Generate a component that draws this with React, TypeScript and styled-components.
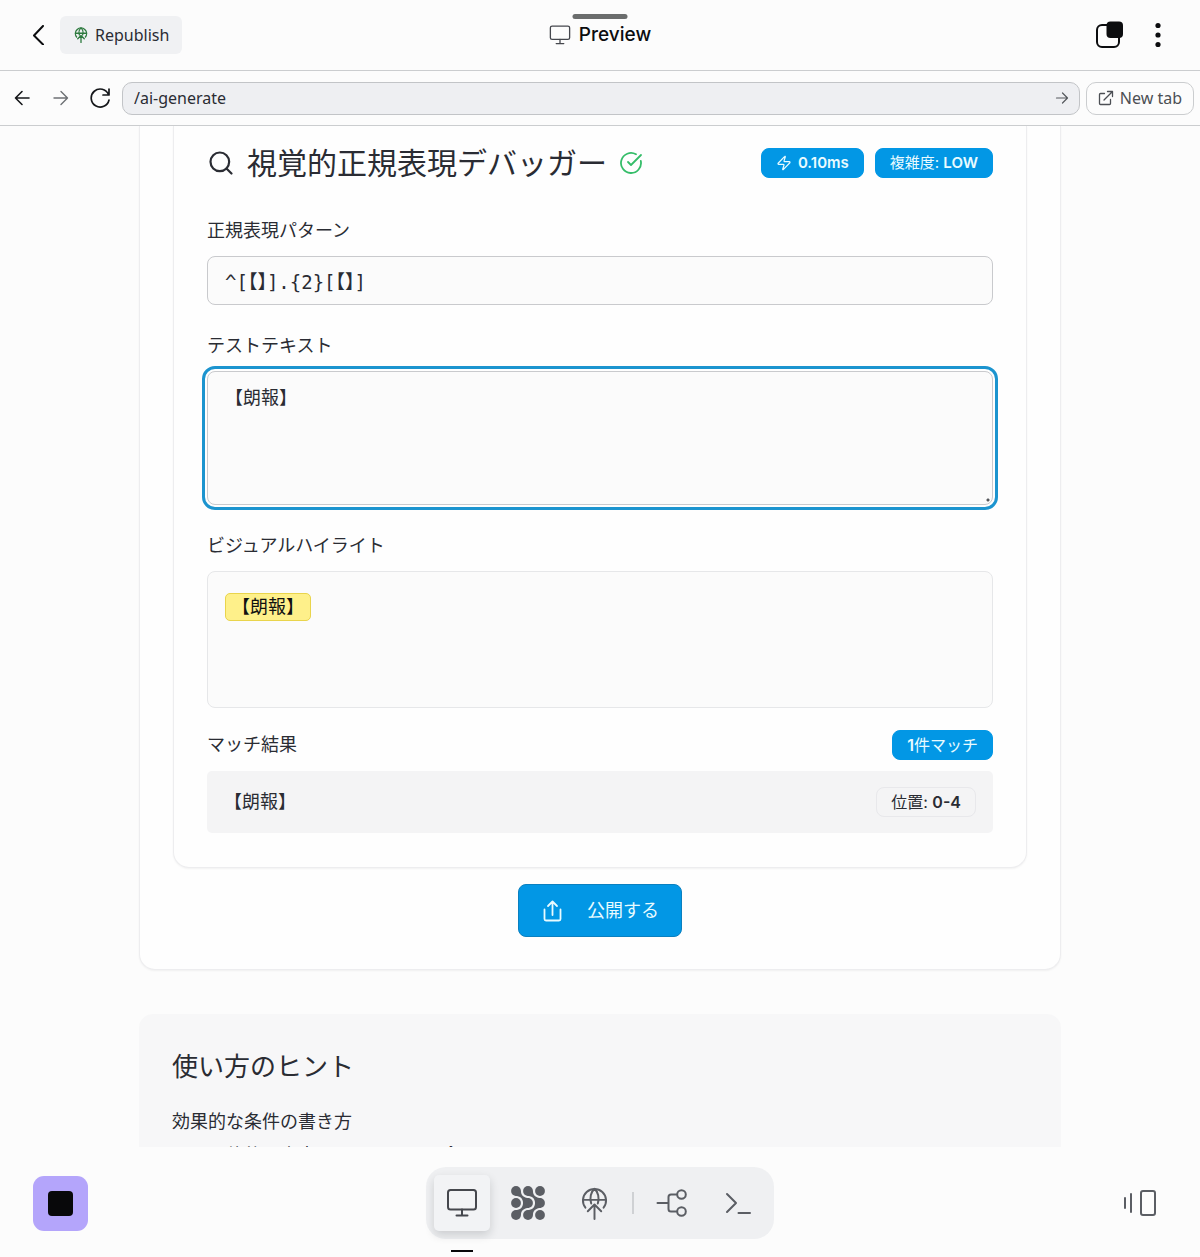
import React, { useState } from "react";
import styled, { createGlobalStyle, css } from "styled-components";
import { CircleCheckBig, Search, Zap } from "lucide-react";

const shell = '"Noto Sans", "Noto Sans CJK JP", sans-serif';
const body = 'Inter, "Noto Sans CJK JP", sans-serif';
const mono = '"DejaVu Sans Mono", "Noto Sans CJK JP", monospace';

const blue = "#0297e5";
const ink = "#2a2c33";
const line = "#cbcdcf";

const GlobalStyle = createGlobalStyle`
  *, *::before, *::after { box-sizing: border-box; }
  body { margin: 0; background: #fcfcfc; color: ${ink}; font-family: ${body}; }
  button, input, textarea { font: inherit; color: inherit; margin: 0; }
  button { cursor: pointer; }
  svg { display: block; flex: none; }
  h1, h2, h3, p, ul { margin: 0; padding: 0; font-weight: 400; }
`;

const Screen = styled.div`
  display: flex;
  flex-direction: column;
  height: 100vh;
  overflow: hidden;
`;

/* ---------- top bar ---------- */

const TopBar = styled.header`
  position: relative;
  display: grid;
  grid-template-columns: 1fr auto 1fr;
  align-items: center;
  height: 71px;
  flex: none;
  padding: 0 28px;
  border-bottom: 1px solid ${line};
  font-family: ${shell};
`;

const Handle = styled.span`
  position: absolute;
  top: 14px;
  left: 50%;
  width: 55px;
  height: 5px;
  border-radius: 3px;
  background: #6b6d6d;
  transform: translateX(-50%);
`;

const Side = styled.div<{ $end?: boolean }>`
  display: flex;
  align-items: center;
  gap: ${(p) => (p.$end ? "20px" : "12px")};
  justify-content: ${(p) => (p.$end ? "flex-end" : "flex-start")};
`;

const IconButton = styled.button`
  display: flex;
  align-items: center;
  justify-content: center;
  padding: 0;
  border: 0;
  background: none;
  color: #0c0d0f;
`;

const Republish = styled.button`
  display: flex;
  align-items: center;
  gap: 6px;
  height: 38px;
  padding: 0 13px;
  border: 0;
  border-radius: 6px;
  background: #f0f1f3;
  font-size: 16px;
  line-height: 24px;
`;

const ScreenTitle = styled.h1`
  display: flex;
  align-items: center;
  gap: 8px;
  color: #0c0d0f;
  font-family: Inter, sans-serif;
  font-size: 19px;
  font-weight: 500;
  line-height: 24px;
`;

/* ---------- browser bar ---------- */

const BrowserBar = styled.nav`
  display: flex;
  align-items: center;
  gap: 6px;
  height: 55px;
  flex: none;
  padding: 0 6px;
  border-bottom: 1px solid ${line};
  font-family: ${shell};
  font-size: 16px;
`;

const NavButtons = styled.div`
  display: flex;
  gap: 7px;
`;

const NavButton = styled(IconButton)<{ $muted?: boolean }>`
  width: 32px;
  height: 32px;
  color: ${(p) => (p.$muted ? "#6d7074" : "#15171a")};
`;

const Address = styled.form`
  display: flex;
  align-items: center;
  flex: 1;
  min-width: 0;
  height: 33px;
  padding: 0 10px 0 11px;
  border: 1px solid #c2c4c7;
  border-radius: 10px;
  background: #eeeff2;
`;

const AddressInput = styled.input`
  flex: 1;
  min-width: 0;
  padding: 0;
  border: 0;
  outline: 0;
  background: none;
`;

const NewTab = styled.a`
  display: flex;
  align-items: center;
  gap: 6px;
  height: 33px;
  padding: 0 11px;
  border: 1px solid ${line};
  border-radius: 10px;
  color: #4c4f54;
  text-decoration: none;
`;

/* ---------- page ---------- */

const Page = styled.main`
  flex: 1;
  min-height: 0;
  overflow: hidden;
`;

const Column = styled.div`
  display: flex;
  flex-direction: column;
  gap: 44px;
  width: calc(100% - 32px);
  max-width: 922px;
  margin: 0 auto;
`;

const cardEdge = css`
  border: 1px solid #ededef;
  border-top: 0;
  border-radius: 0 0 16px 16px;
  background: #fefefe;
  box-shadow: 0 1px 2px rgba(0, 0, 0, 0.05);
`;

const OuterCard = styled.section`
  ${cardEdge}
  display: flex;
  flex-direction: column;
  align-items: center;
  gap: 16px;
  padding: 0 33px 32px;
`;

const InnerCard = styled.section`
  ${cardEdge}
  width: 100%;
  padding: 19px 33px 34px;
`;

const SplitRow = styled.div`
  display: flex;
  align-items: center;
  justify-content: space-between;
`;

const Cluster = styled.div<{ $gap: number }>`
  display: flex;
  align-items: center;
  gap: ${(p) => p.$gap}px;
`;

const CardTitle = styled.h2`
  font-size: 30px;
  line-height: 36px;
`;

const Badge = styled.span<{ $outline?: boolean; $large?: boolean }>`
  display: flex;
  align-items: center;
  gap: 6px;
  height: 30px;
  padding: 0 14px;
  border: 1px solid ${(p) => (p.$outline ? "#e8e8eb" : blue)};
  border-radius: 8px;
  background: ${(p) => (p.$outline ? "transparent" : blue)};
  color: ${(p) => (p.$outline ? ink : "#e9fbff")};
  font-size: ${(p) => (p.$large ? "16px" : "15px")};
  line-height: 20px;
  white-space: pre;

  strong { font-weight: 600; }
`;

const Field = styled.div`
  display: flex;
  flex-direction: column;
  gap: 13px;
  margin-top: 29px;

  &:first-of-type { margin-top: 0; }
`;

const Fields = styled.div`
  margin: 38px 0 22px;
`;

const labelText = css`
  font-size: 18px;
  line-height: 24px;
`;

const Label = styled.label`${labelText}`;
const Heading = styled.h3`${labelText}`;

const boxEdge = css`
  display: block;
  width: 100%;
  border: 1px solid #c9cacd;
  border-radius: 8px;
  background: #fbfbfb;
  font-size: 18px;
`;

const PatternInput = styled.input`
  ${boxEdge}
  height: 49px;
  padding: 0 17px;
  font-family: ${mono};
  font-size: 19px;
  font-feature-settings: "halt";
`;

const TestArea = styled.textarea`
  ${boxEdge}
  height: 134px;
  padding: 13px 17px;
  line-height: 26px;
  outline: 3px solid #1c94cf;
  outline-offset: 2px;
  resize: vertical;

  &::-webkit-resizer {
    background: radial-gradient(circle at 11px 11px, #55575b 1px, transparent 2px);
  }
`;

const Preview = styled.div`
  ${boxEdge}
  height: 137px;
  padding: 21px 17px;
  border-color: #e6e7e9;
`;

const Match = styled.mark`
  display: inline-block;
  padding: 0 6px;
  border: 1px solid #e9d44c;
  border-radius: 5px;
  background: #fef08a;
  color: #111;
  line-height: 26px;
  vertical-align: top;
`;

const ResultRow = styled.li`
  display: flex;
  align-items: center;
  justify-content: space-between;
  height: 62px;
  margin-top: 11px;
  padding: 0 17px;
  border-radius: 5px;
  background: #f4f4f5;
  font-size: 18px;
  line-height: 24px;
`;

const PublishButton = styled.button`
  display: flex;
  align-items: center;
  gap: 22px;
  height: 53px;
  padding: 0 22px;
  border: 1px solid #0a80c0;
  border-radius: 8px;
  background: ${blue};
  color: #e9fbff;
  font-size: 18px;
  line-height: 24px;
`;

const Hints = styled.section`
  padding: 35px 33px;
  border-radius: 14px;
  background: #f7f7f8;
`;

const HintsTitle = styled.h2`
  margin-bottom: 25px;
  font-size: 26px;
  line-height: 36px;
`;

const HintList = styled.ul`
  margin-top: 9px;
  padding-left: 36px;
  font-size: 18px;
  line-height: 26px;
`;

/* ---------- dock ---------- */

const Footer = styled.footer`
  display: grid;
  grid-template-columns: 1fr auto 1fr;
  align-items: center;
  flex: none;
  padding: 20px 33px 18px;
`;

const StopButton = styled.button`
  display: flex;
  align-items: center;
  justify-content: center;
  width: 55px;
  height: 55px;
  padding: 0;
  border: 0;
  border-radius: 11px;
  background: #b4a5fb;
`;

const StopMark = styled.span`
  width: 25px;
  height: 25px;
  border-radius: 4px;
  background: #08080a;
`;

const PanesButton = styled(IconButton)`
  width: 55px;
  height: 55px;
`;

const Dock = styled.div`
  display: flex;
  align-items: center;
  gap: 10px;
  height: 72px;
  padding: 0 8px;
  border-radius: 20px;
  background: #eff0f2;
`;

const DockButton = styled.button<{ $active?: boolean }>`
  position: relative;
  display: flex;
  align-items: center;
  justify-content: center;
  width: 56px;
  height: 56px;
  padding: 0;
  border: 0;
  border-radius: 5px;
  background: none;
  color: #5b5e64;

  ${(p) =>
    p.$active &&
    css`
      background: #f2f3f5;
      color: #45474d;
      box-shadow: 0 4px 10px rgba(20, 24, 32, 0.16);

      &::after {
        content: "";
        position: absolute;
        top: 75px;
        left: 17px;
        width: 22px;
        height: 2px;
        background: #08080a;
      }
    `}
`;

const DockDivider = styled.span`
  width: 2px;
  height: 22px;
  background: #cfd1d4;
`;

/* ---------- icons ---------- */

type IconProps = { size: number; box?: number; width?: number; color?: string; children: React.ReactNode };

const Icon = ({ size, box = size, width = 2, color = "currentColor", children }: IconProps) => (
  <svg
    width={size}
    height={size}
    viewBox={`0 0 ${box} ${box}`}
    fill="none"
    stroke={color}
    strokeWidth={width}
    strokeLinecap="round"
    strokeLinejoin="round"
    aria-hidden="true"
  >
    {children}
  </svg>
);

const MonitorIcon = ({ size, width, color }: { size: number; width: number; color?: string }) => (
  <Icon size={size} box={32} width={width} color={color}>
    <rect x="2" y="3" width="28" height="19.5" rx="2.5" />
    <path d="M16 22.5v6M10.5 28.5h11" />
  </Icon>
);

const GlobeUpIcon = ({ size, width, color }: { size: number; width: number; color?: string }) => (
  <Icon size={size} box={32} width={width} color={color}>
    <path d="M7.2 20A11.2 11.2 0 1 1 24.8 20" />
    <path d="M5 12.5h22M12.8 16C11 11 12.5 4.500 16 1.800C19.500 4.500 21 11 19.200 16" />
    <path d="M16 31V17M9.500 23.500l6.500-6.500 6.500 6.500" />
  </Icon>
);

const DotsWeaveIcon = () => (
  <svg width="34" height="34" viewBox="0 0 34 34" fill="currentColor" aria-hidden="true">
    {[5, 17, 29].map((y) => [5, 17, 29].map((x) => <circle key={`${x}-${y}`} cx={x} cy={y} r="4.9" />))}
    {[0, 12].map((dx) => (
      <g key={dx} transform={`translate(${dx} 0)`}>
        <path d="M9.800 4.200C10 9.500 12.500 11.500 18 12.200L17 21.800C13 21.500 12.200 19.500 12.100 17C11.800 12.500 9.500 10.200 4.200 9.800z" />
        <path d="M9.800 29.800C10 24.500 12.500 22.500 18 21.800L17 12.200C13 12.500 12.200 14.500 12.100 17C11.800 21.500 9.500 23.800 4.200 24.200z" />
      </g>
    ))}
  </svg>
);

export default function App() {
  const [path, setPath] = useState("/ai-generate");
  const [pattern, setPattern] = useState("^[【】].{2}[【】]");
  const [text, setText] = useState("【朗報】");

  return (
    <Screen>
      <GlobalStyle />
      <TopBar>
        <Handle />
        <Side>
          <IconButton aria-label="Back">
            <Icon size={20} width={2}>
              <path d="M15 1L6 10.5l9 9" />
            </Icon>
          </IconButton>
          <Republish>
            <GlobeUpIcon size={16} width={2.6} color="#2d7a3e" />
            Republish
          </Republish>
        </Side>
        <ScreenTitle>
          <MonitorIcon size={22} width={1.9} color="#45474d" />
          Preview
        </ScreenTitle>
        <Side $end>
          <IconButton aria-label="Tabs">
            <Icon size={30} width={2}>
              <rect x="3" y="5" width="22" height="22" rx="5" />
              <rect x="12.5" y="1.5" width="16.5" height="16.5" rx="4" fill="currentColor" stroke="none" />
            </Icon>
          </IconButton>
          <IconButton aria-label="More">
            <Icon size={28}>
              <g fill="currentColor" stroke="none">
                <circle cx="14" cy="4.5" r="2.6" />
                <circle cx="14" cy="14" r="2.6" />
                <circle cx="14" cy="23.5" r="2.6" />
              </g>
            </Icon>
          </IconButton>
        </Side>
      </TopBar>

      <BrowserBar>
        <NavButtons>
          <NavButton aria-label="Go back">
            <Icon size={16} width={1.6}>
              <path d="M15 8H1.5M8 1.5L1.5 8 8 14.5" />
            </Icon>
          </NavButton>
          <NavButton aria-label="Go forward" $muted>
            <Icon size={16} width={1.4}>
              <path d="M1 8h13.5M8 1.5L14.5 8 8 14.5" />
            </Icon>
          </NavButton>
          <NavButton aria-label="Reload">
            <Icon size={22} width={1.7}>
              <path d="M20 2v6h-6M19.5 7.5A9 9 0 1 0 20 13" />
            </Icon>
          </NavButton>
        </NavButtons>
        <Address onSubmit={(e) => e.preventDefault()}>
          <AddressInput aria-label="Address" value={path} onChange={(e) => setPath(e.target.value)} />
          <IconButton aria-label="Go">
            <Icon size={14} width={1.2} color="#55585d">
              <path d="M1.5 7h11M7.5 2l5 5-5 5" />
            </Icon>
          </IconButton>
        </Address>
        <NewTab href="#new-tab">
          <Icon size={16} width={1.3}>
            <path d="M6.5 3.5h-4a1 1 0 0 0-1 1v9a1 1 0 0 0 1 1h9a1 1 0 0 0 1-1v-4M6 10l8.5-8.5M9.5 1.5h5v5" />
          </Icon>
          New tab
        </NewTab>
      </BrowserBar>

      <Page>
        <Column>
          <OuterCard>
            <InnerCard>
              <SplitRow>
                <Cluster $gap={12}>
                  <Search size={28} strokeWidth={1.9} />
                  <CardTitle>視覚的正規表現デバッガー</CardTitle>
                  <CircleCheckBig size={24} strokeWidth={1.8} color="#35bd69" />
                </Cluster>
                <Cluster $gap={11}>
                  <Badge>
                    <Zap size={16} strokeWidth={1.8} />
                    <strong>0.10ms</strong>
                  </Badge>
                  <Badge>
                    <span>
                      複雑度: <strong>LOW</strong>
                    </span>
                  </Badge>
                </Cluster>
              </SplitRow>

              <Fields>
                <Field>
                  <Label htmlFor="pattern">正規表現パターン</Label>
                  <PatternInput id="pattern" value={pattern} onChange={(e) => setPattern(e.target.value)} />
                </Field>
                <Field>
                  <Label htmlFor="text">テストテキスト</Label>
                  <TestArea id="text" value={text} onChange={(e) => setText(e.target.value)} />
                </Field>
                <Field>
                  <Heading>ビジュアルハイライト</Heading>
                  <Preview>
                    <Match>【朗報】</Match>
                  </Preview>
                </Field>
              </Fields>

              <SplitRow>
                <Heading>マッチ結果</Heading>
                <Badge $large>
                  <span>
                    <strong>1</strong>件マッチ
                  </span>
                </Badge>
              </SplitRow>
              <ul>
                <ResultRow>
                  【朗報】
                  <Badge $outline $large>
                    <span>
                      位置: <strong>0-4</strong>
                    </span>
                  </Badge>
                </ResultRow>
              </ul>
            </InnerCard>

            <PublishButton>
              <Icon size={24} width={1.8}>
                <path d="M3.5 10.500V20a1.500 1.500 0 0 0 1.500 1.500h13A1.500 1.500 0 0 0 19.500 20v-9.500M11.500 16V2.500M7 7L11.500 2.500 16 7" />
              </Icon>
              公開する
            </PublishButton>
          </OuterCard>

          <Hints>
            <HintsTitle>使い方のヒント</HintsTitle>
            <Heading>効果的な条件の書き方</Heading>
            <HintList>
              <li>具体的な文字やキーワードを含む</li>
            </HintList>
          </Hints>
        </Column>
      </Page>

      <Footer>
        <Side>
          <StopButton aria-label="Stop">
            <StopMark />
          </StopButton>
        </Side>
        <Dock>
          <DockButton $active aria-label="Preview">
            <MonitorIcon size={32} width={2} />
          </DockButton>
          <DockButton aria-label="Agent">
            <DotsWeaveIcon />
          </DockButton>
          <DockButton aria-label="Publish">
            <GlobeUpIcon size={33} width={1.9} />
          </DockButton>
          <DockDivider />
          <DockButton aria-label="Version control">
            <Icon size={32} width={2}>
              <path d="M1.5 16h11M21 7.5h-6a2.5 2.5 0 0 0-2.5 2.5v12a2.5 2.5 0 0 0 2.5 2.5h6" />
              <circle cx="25.5" cy="7.5" r="4.3" />
              <circle cx="25.5" cy="24.5" r="4.3" />
            </Icon>
          </DockButton>
          <DockButton aria-label="Shell">
            <Icon size={28} width={2}>
              <path d="M3 5l9 9-9 9M14.5 24h11.5" />
            </Icon>
          </DockButton>
        </Dock>
        <Side $end>
          <PanesButton aria-label="Switch panes">
            <Icon size={34} width={2} color="#5b5e64">
              <path d="M2 12v10M8 8v18M20 5h10a2 2 0 0 1 2 2v20a2 2 0 0 1-2 2H20a2 2 0 0 1-2-2V7a2 2 0 0 1 2-2z" />
            </Icon>
          </PanesButton>
        </Side>
      </Footer>
    </Screen>
  );
}
